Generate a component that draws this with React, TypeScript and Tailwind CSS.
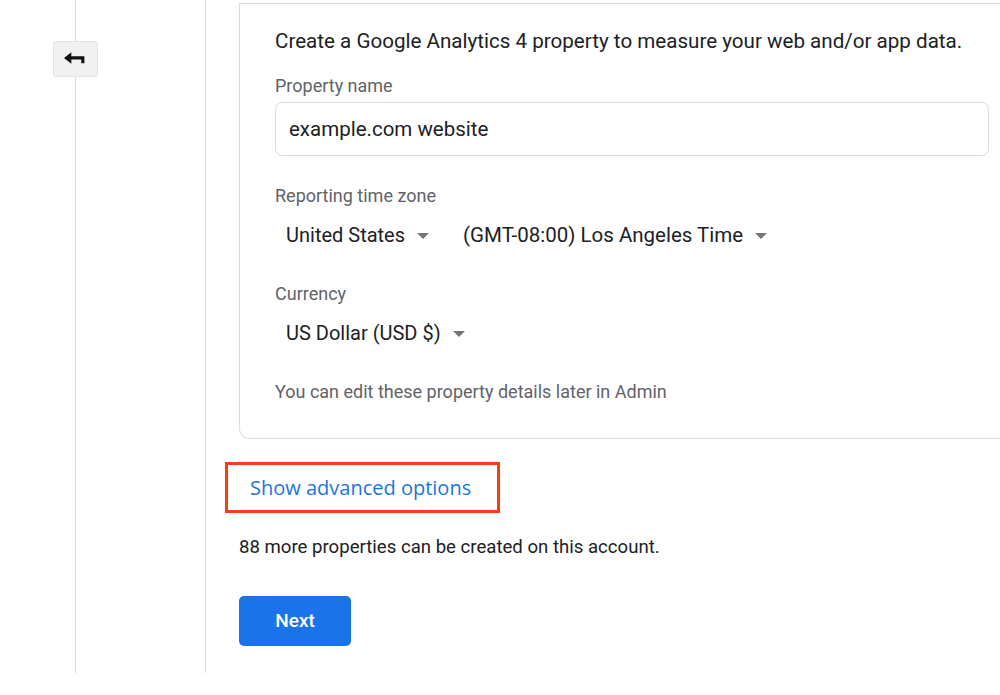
import React from "react";

const font = { fontFamily: "Roboto, 'Noto Sans', sans-serif" };

const Caret = () => (
  <svg width="12" height="6" viewBox="0 0 12 6" className="ml-[12px] mt-[2px]">
    <path d="M0 0h12L6 6z" fill="#757575" />
  </svg>
);

const Select = ({ label, wide }: { label: string; wide?: boolean }) => (
  <div className={"flex items-center px-[11px] h-[40px] text-[#202124] " + (wide ? "text-[20.5px]" : "text-[20px]")}>
    <span>{label}</span>
    <Caret />
  </div>
);

const Label = ({ children }: { children: React.ReactNode }) => (
  <div className="text-[18px] leading-[24px] text-[#5f6368]">{children}</div>
);

export default function App() {
  return (
    <div className="bg-white w-[1000px] h-[695px] overflow-hidden" style={font}>
      <div className="flex h-[673px]">
        <div className="relative w-[76px] shrink-0 border-r border-[#dadce0]">
          <button className="absolute left-[53px] top-[41px] w-[45px] h-[36px] flex items-center justify-center rounded-[3px] border border-[#e3e3e3] bg-[#f1f1f1]">
            <svg width="23" height="15" viewBox="0 0 22 14">
              <path d="M0 5.5L7 0v4h12.5v6.5h-3V7H7v4z" fill="#111" />
            </svg>
          </button>
        </div>
        <div className="w-[130px] shrink-0 border-r border-[#dadce0]" />
        <main className="flex-1 min-w-0 pl-[33px]">
          <section className="mt-[3px] w-[800px] border-t border-l border-b border-[#dadce0] rounded-bl-[10px] pl-[35px] pt-[24px] pb-[34px]">
            <p className="text-[20.6px] leading-[26px] text-[#202124]">
              Create a Google Analytics 4 property to measure your web and/or app data.
            </p>
            <div className="mt-[20px]">
              <Label>Property name</Label>
            </div>
            <div className="mt-[4px] w-[714px] h-[54px] flex items-center px-[13px] border border-[#dadce0] rounded-[7px] text-[20.5px] text-[#202124]">
              example.com website
            </div>
            <div className="mt-[28px]">
              <Label>Reporting time zone</Label>
            </div>
            <div className="mt-[7px] flex gap-[12px]">
              <Select label="United States" />
              <Select label="(GMT-08:00) Los Angeles Time" wide />
            </div>
            <div className="mt-[27px]">
              <Label>Currency</Label>
            </div>
            <div className="mt-[7px] flex">
              <Select label="US Dollar (USD $)" />
            </div>
            <div className="mt-[27px]">
              <Label>You can edit these property details later in Admin</Label>
            </div>
          </section>

          <div className="mt-[23px] ml-[-14px] w-[275px] h-[51px] border-[3px] border-[#fb3c11] flex items-center pl-[22px]">
            <span className="text-[20px] text-[#1a73e8]" style={{ fontFamily: "'Open Sans', Roboto, sans-serif", fontWeight: 500 }}>
              Show advanced options
            </span>
          </div>

          <p className="mt-[22px] text-[18.6px] leading-[24px] text-[#202124]">
            88 more properties can be created on this account.
          </p>

          <button className="mt-[37px] w-[112px] h-[50px] rounded-[5px] bg-[#1a73e8] text-white text-[19px] font-medium">
            Next
          </button>
        </main>
      </div>
    </div>
  );
}
